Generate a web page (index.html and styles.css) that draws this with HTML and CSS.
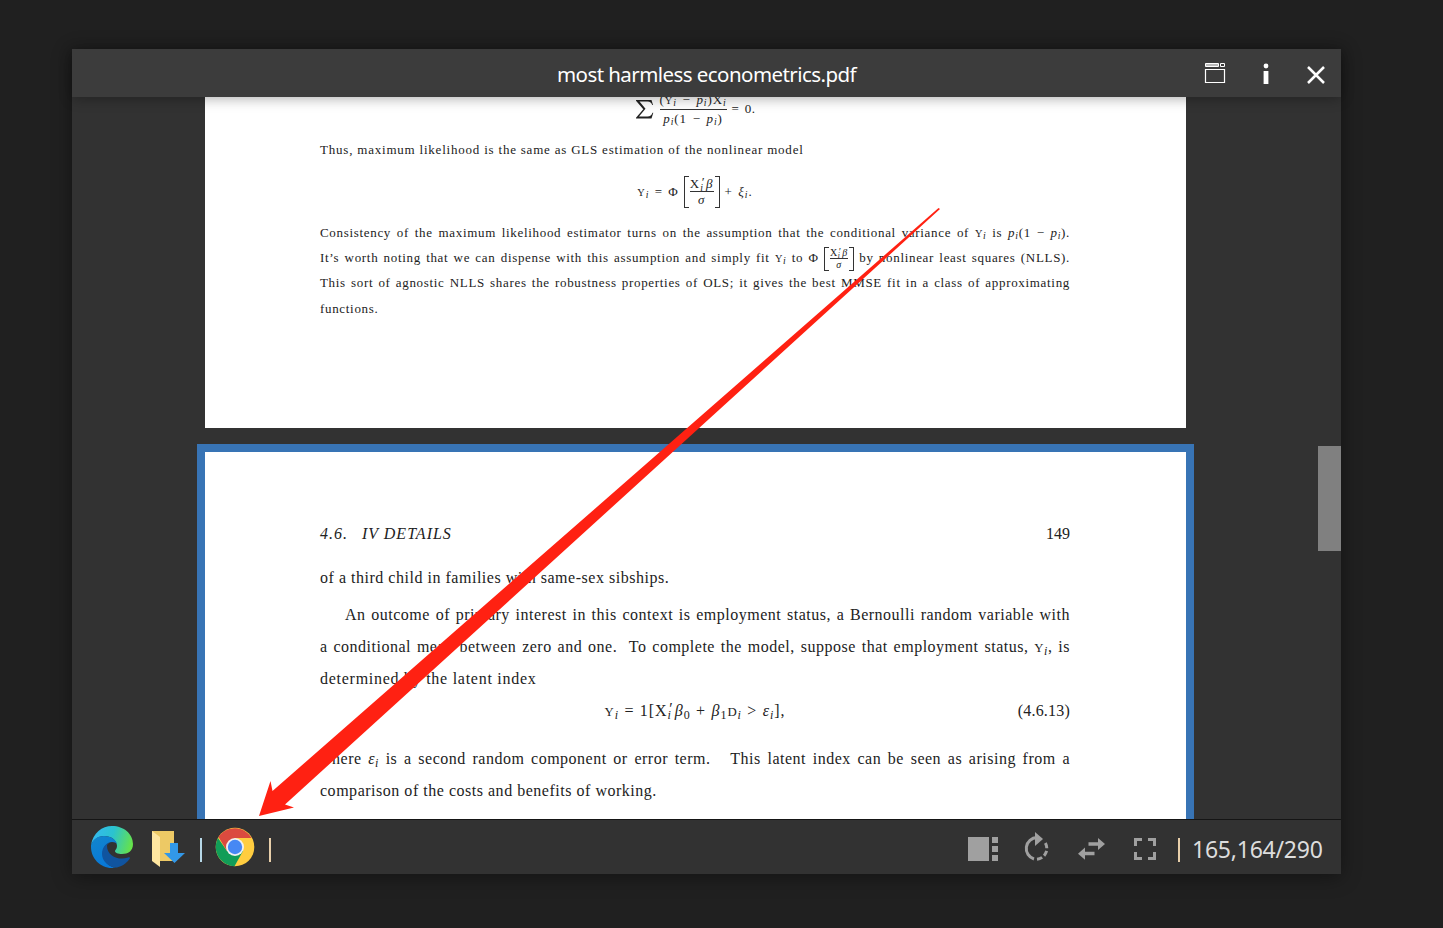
FILE: index.html
```html
<!DOCTYPE html>
<html lang="en">
<head>
<meta charset="utf-8">
<title>most harmless econometrics.pdf</title>
<link rel="stylesheet" href="styles.css">
</head>
<body>
<div class="window">
  <header class="titlebar">
    <span class="title">most harmless econometrics.pdf</span>
    <div class="controls">
      <svg width="22" height="22" viewBox="0 0 22 22" fill="none" stroke="#fff"><path d="M1.500 1.500h13v3h-13z" fill="#bbb"/><path d="M16.500 1.500h4v3h-4z"/><path d="M1.500 7.500h19v13h-19z" stroke-width="1.200"/></svg>
      <svg width="8" height="22" viewBox="0 0 8 22" fill="#fff"><circle cx="4" cy="3" r="2.400"/><path d="M1.600 8h4.800v13H1.600z"/></svg>
      <svg width="20" height="20" viewBox="0 0 20 20" stroke="#fff" stroke-width="2.500"><path d="M2 2l16 16M18 2L2 18"/></svg>
    </div>
  </header>
  <main class="viewer">
    <section class="page page-prev">
      <div class="eq eq-score"><svg class="sum" width="20" height="20" viewBox="0 0 20 20"><path d="M1 1h15.500l1.500 5h-.8q-1-3.500-4.500-3.500H4.500l6 7.200-6.500 7.800h8.500q4 0 5-3.700h.8L16.500 19.500H1v-.8l7.300-8.500L1 1.800z" fill="#222"/></svg><span class="frac"><span class="num">(<span class="sc">Y</span><sub>i</sub> − <i>p</i><sub>i</sub>)X<sub>i</sub></span><span class="den"><i>p</i><sub>i</sub>(1 − <i>p</i><sub>i</sub>)</span></span><span>= 0.</span></div>
      <p class="ln thus">Thus, maximum likelihood is the same as GLS estimation of the nonlinear model</p>
      <div class="eq eq-probit"><span><span class="sc">Y</span><sub>i</sub> = Φ</span><span class="bracket"><span class="frac"><span class="num">X<span class="ss"><sup>′</sup><sub>i</sub></span><i>β</i></span><span class="den"><i>σ</i></span></span></span><span>+ <i>ξ</i><sub>i</sub>.</span></div>
      <p class="ln full first">Consistency of the maximum likelihood estimator turns on the assumption that the conditional variance of <span class="sc">Y</span><sub>i</sub> is <i>p</i><sub>i</sub>(1&nbsp;−&nbsp;<i>p</i><sub>i</sub>).</p>
      <p class="ln full">It’s worth noting that we can dispense with this assumption and simply fit <span class="sc">Y</span><sub>i</sub> to Φ <span class="bracket small"><span class="frac"><span class="num">X<span class="ss"><sup>′</sup><sub>i</sub></span><i>β</i></span><span class="den"><i>σ</i></span></span></span> by nonlinear least squares (NLLS).</p>
      <p class="ln full">This sort of agnostic NLLS shares the robustness properties of OLS; it gives the best MMSE fit in a class of approximating</p>
      <p class="ln last">functions.</p>
    </section>
    <section class="page page-current">
      <div class="running"><i>4.6.&ensp; IV DETAILS</i><span>149</span></div>
      <p class="ln sib">of a third child in families with same-sex sibships.</p>
      <p class="ln full indent">An outcome of primary interest in this context is employment status, a Bernoulli random variable with</p>
      <p class="ln full">a conditional mean between zero and one.&nbsp; To complete the model, suppose that employment status, <span class="sc">Y</span><sub>i</sub>, is</p>
      <p class="ln determined">determined by the latent index</p>
      <div class="numbered"><span></span><span class="formula"><span class="sc">Y</span><sub>i</sub> = 1[X<span class="ss"><sup>′</sup><sub>i</sub></span><i>β</i><sub class="n">0</sub> + <i>β</i><sub class="n">1</sub><span class="sc">D</span><sub>i</sub> &gt; <i>ε</i><sub>i</sub>],</span><span class="eqno">(4.6.13)</span></div>
      <p class="ln full where">where <i>ε</i><sub>i</sub> is a second random component or error term.&nbsp;&nbsp; This latent index can be seen as arising from a</p>
      <p class="ln costs">comparison of the costs and benefits of working.</p>
    </section>
    <div class="scroll-thumb"></div>
  </main>
  <footer class="toolbar">
    <div class="apps">
      <svg width="42" height="42" viewBox="0 0 42 42">
        <defs>
          <linearGradient id="ea" x1="0" y1=".3" x2="1" y2=".5"><stop offset="0" stop-color="#35b9f1"/><stop offset=".5" stop-color="#2bc3cf"/><stop offset="1" stop-color="#65e24b"/></linearGradient>
          <linearGradient id="eb" x1="0" y1="0" x2=".5" y2="1"><stop offset="0" stop-color="#1286cc"/><stop offset="1" stop-color="#0878d8"/></linearGradient>
        </defs>
        <path d="M0 19C2 7 11 0 21 0 33 0 42 8 42 18c0 7-5 10-11 10-4 0-7-1-7-3 0-1 2-2 2-5 0-6-6-10-13-10C7 10 2 14 0 19z" fill="url(#ea)"/>
        <path d="M0 19C2 13 7 10 13 10c7 0 13 4 13 9 0-2-2-3-5-3-5 0-9 5-9 11 0 8 6 14 13 15h-4C9 42 0 32 0 21z" fill="url(#eb)"/>
        <path d="M21 16c-6 0-10 6-10 12 0 7 7 14 15 13.500 6-1.500 11-5.500 13-9.500 0-1-1-1-2-.5C28 35 16 30 16 20c0-2 3-4 5-4z" fill="#10549f"/>
      </svg>
      <svg class="folder" width="33" height="37" viewBox="0 0 33 37"><path d="M0 1h22v30H0z" fill="#edc965"/><path d="M0 1l8 6v30l-8-6z" fill="#ffe6a0"/><path d="M18 13h8v10h7L22.500 33 12 23h6z" fill="#3298e8"/></svg>
      <span class="bar"></span>
      <svg class="chrome" width="40" height="40" viewBox="0 0 40 40"><circle cx="20" cy="20" r="19.300" fill="#ffcd40"/><path d="M3 11A19.300 19.300 0 0 0 19.500 39.300L28 24 20 20 12 24z" fill="#119d58"/><path d="M3.500 10A19.300 19.300 0 0 1 36.500 11H20L12 24z" fill="#db4a3f"/><circle cx="20" cy="20" r="9" fill="#f1f1f1"/><circle cx="20" cy="20" r="7.200" fill="#4688f4"/></svg>
      <span class="bar warm"></span>
    </div>
    <div class="tools">
      <svg width="31" height="24" viewBox="0 0 31 24" fill="#a0a0a0"><path d="M0 0h21v24H0zM24 0h6v6h-6zM24 9h6v6h-6zM24 18h6v6h-6z"/></svg>
      <svg width="26" height="30" viewBox="0 0 26 30"><path d="M13 5.500A11 11 0 0 0 10 27" fill="none" stroke="#a0a0a0" stroke-width="3"/><path d="M11 0l8 7-8 7z" fill="#a0a0a0"/><path d="M13 27.300A11 11 0 0 0 20 9" fill="none" stroke="#a0a0a0" stroke-width="3" stroke-dasharray="5.500 2.500"/></svg>
      <svg width="27" height="22" viewBox="0 0 27 22" fill="#a0a0a0"><path d="M10.500 4.300H20V0l7 6-7 6V7.700h-9.500zM16.500 13.700H7V9.500L0 15.800l7 6v-4.600h9.500z"/></svg>
      <svg width="22" height="22" viewBox="0 0 22 22" fill="none" stroke="#a0a0a0" stroke-width="3"><path d="M1.500 8V1.500H8M14 1.500h6.500V8M20.500 14v6.500H14M8 20.500H1.500V14"/></svg>
      <span class="bar warm"></span>
      <span class="count">165,164/290</span>
    </div>
  </footer>
  <svg class="arrow" width="684" height="612" viewBox="0 0 684 612"><path d="M680.500 0L14.500 583 12.500 573 1 608 36 599.500 27 596.500 682 1z" fill="#ff2112"/></svg>
</div>
</body>
</html>
```
FILE: styles.css
```css
* { box-sizing: border-box; }
body { margin: 0; height: 928px; overflow: hidden; background: #202020; padding: 49px 102px 54px 72px; }
.window { position: relative; width: 1269px; height: 825px; display: flex; flex-direction: column; background: #323232; box-shadow: 0 3px 18px rgba(0,0,0,.4); font-family: "Noto Sans", sans-serif; }
.titlebar { height: 48px; flex: none; background: #3c3c3c; display: grid; grid-template-columns: 1fr auto 1fr; align-items: center; z-index: 1; box-shadow: 0 2px 12px rgba(0,0,0,.3); }
.title { grid-column: 2; color: #fff; font-size: 20.500px; letter-spacing: -.56px; line-height: 46px; padding-top: 2px; white-space: nowrap; }
.controls { justify-self: end; display: flex; align-items: center; padding-right: 15px; color: #fff; }
.controls svg:nth-child(2) { margin: 2px 36px 0 36px; }
.controls svg:nth-child(3) { margin-top: 3px; }
.viewer { position: relative; height: 722px; flex: none; overflow: hidden; padding-left: 125px; }
.page { width: 997px; font-family: "Liberation Serif", serif; color: #222; background: #fff; }
.page-prev { margin-left: 8px; width: 981px; height: 331px; padding: 0 116px 0 115px; font-size: 13px; }
.page-current { margin-top: 16px; height: 500px; border: 8px solid #3874b5; padding: 66px 116px 0 115px; font-size: 16px; }
.ln { margin: 0; white-space: nowrap; height: 32px; line-height: 32px; letter-spacing: .5px; }
.page-prev .ln { height: 25px; line-height: 25px; letter-spacing: .68px; }
.full { text-align: justify; text-align-last: justify; white-space: normal; }
.page-prev .thus { margin-top: 16px; letter-spacing: .79px; }
.page-prev .first { margin-top: 8px; }
.page-prev .last { padding-top: 1px; }
.page-current .sib, .page-current .costs { letter-spacing: .52px; }
.page-current .determined { letter-spacing: .73px; }
.sc { font-size: .8em; }
sub, sup { font-size: .75em; line-height: 0; font-style: italic; vertical-align: -.25em; }
sub.n { font-style: normal; }
.ss { display: inline-block; position: relative; width: .45em; height: 0; line-height: 0; }
.ss sup, .ss sub { position: absolute; left: 0; bottom: 0; }
.ss sup { font-size: 1em; left: .05em; bottom: .45em; }
.ss sub { bottom: .05em; }
.eq { display: flex; align-items: center; justify-content: center; gap: 5px; letter-spacing: .5px; word-spacing: 1.500px; }
.eq-score { height: 24px; }
.eq-score .frac { letter-spacing: .9px; }
.frac { display: inline-flex; flex-direction: column; align-items: center; line-height: 17px; }
.num { border-bottom: 1px solid #333; }
.eq-probit { height: 40px; margin-top: 10px; letter-spacing: 1px; word-spacing: 1px; }
.bracket { display: inline-block; padding: 0 5px; background: linear-gradient(#333,#333) 0 0/4px 1px no-repeat, linear-gradient(#333,#333) 0 100%/4px 1px no-repeat, linear-gradient(#333,#333) 100% 0/4px 1px no-repeat, linear-gradient(#333,#333) 100% 100%/4px 1px no-repeat; border: solid #333; border-width: 0 1px; height: 32px; }
.bracket .frac { line-height: 15px; }
.bracket.small { height: 24px; vertical-align: middle; font-size: 10px; line-height: 0; }
.small .frac { line-height: 11px; }
.running { height: 32px; display: flex; justify-content: space-between; line-height: 32px; }
.running i { letter-spacing: 1px; }
.sib { margin-top: 12px; }
.indent { margin-top: 5px; padding-left: 25px; }
.numbered { height: 32px; line-height: 32px; display: grid; grid-template-columns: 1fr auto 1fr; }
.formula { letter-spacing: .95px; word-spacing: .5px; }
.eqno { text-align: right; letter-spacing: .2px; }
.where { margin-top: 16px; }
.scroll-thumb { position: absolute; right: 0; top: 349px; width: 23px; height: 105px; background: #808080; }
.toolbar { height: 55px; border-top: 1px solid #151515; background: #323232; display: flex; justify-content: space-between; align-items: center; padding: 0 18px 0 19px; }
.apps, .tools { display: flex; align-items: center; }
.folder { margin: 2px 15px 0 19px; }
.bar { width: 2px; height: 24px; margin-top: 6px; background: #b7d8e8; }
.bar.warm { background: #e8cfaa; }
.chrome { margin: 0 14px 0 13px; }
.tools { padding-top: 4px; }
.tools .bar { margin: 2px 12px 0 22px; }
.tools svg:nth-child(2) { margin: -4px 28px 0 25px; }
.tools svg:nth-child(4) { margin-left: 29px; }
.count { width: 131px; white-space: nowrap; color: #ddd; font-size: 23px; letter-spacing: -.23px; line-height: 30px; margin-top: -1px; }
.arrow { position: absolute; left: 186px; top: 159px; z-index: 2; pointer-events: none; }
```
